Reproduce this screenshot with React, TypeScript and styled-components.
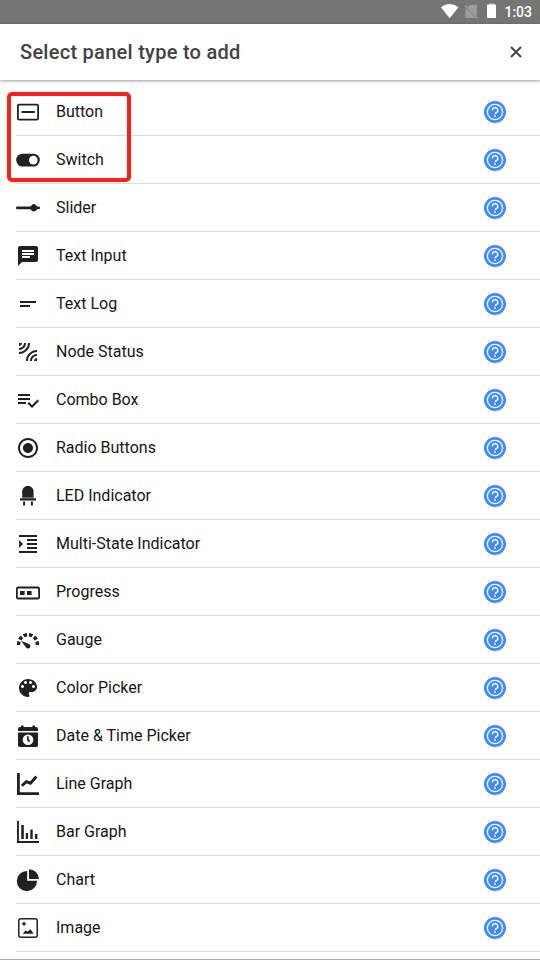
import React from "react";
import styled, { createGlobalStyle } from "styled-components";

const GlobalStyle = createGlobalStyle`
  * { box-sizing: border-box; }
  body { margin: 0; background: #fff; overflow: hidden; }
`;

const Screen = styled.div`
  display: flex;
  flex-direction: column;
  width: 540px;
  height: 960px;
  overflow: hidden;
  background: #fff;
  border-bottom: 1px solid #a9abab;
  font-family: Roboto, "Liberation Sans", sans-serif;
  color: #161616;
`;

const StatusBar = styled.div`
  display: flex;
  flex: none;
  align-items: center;
  justify-content: flex-end;
  height: 24px;
  padding-right: 8px;
  background: #757575;
  color: #fff;
`;

const StatusIcons = styled.svg`
  width: 60px;
  height: 24px;
  margin-right: 4px;
`;

const Clock = styled.span`
  font-size: 14px;
  font-weight: 500;
  line-height: 24px;
`;

const Header = styled.header`
  display: flex;
  flex: none;
  align-items: center;
  justify-content: space-between;
  height: 56px;
  padding: 0 16px 0 20px;
  background: #fff;
  box-shadow: 0 1px 3px rgba(0, 0, 0, 0.4);
`;

const Title = styled.h1`
  margin: 0;
  font-size: 20px;
  font-weight: 500;
  line-height: 56px;
  letter-spacing: 0.27px;
  color: #424242;
`;

const CloseButton = styled.button`
  display: flex;
  padding: 0;
  border: 0;
  background: none;
  color: #424242;
`;

const List = styled.ul`
  margin: 0;
  padding: 8px 0 0 16px;
  list-style: none;
`;

const Row = styled.li`
  display: flex;
  align-items: center;
  height: 48px;
  padding: 1px 34px 0 0;
  border-bottom: 1px solid #dcdcdc;
`;

const Label = styled.span`
  flex: 1;
  margin-left: 16px;
  font-size: 16px;
  line-height: 24px;
`;

const Glyph = styled.svg`
  display: block;
  flex: none;
  width: 24px;
  height: 24px;
  fill: #212121;
`;

const HelpGlyph = styled.svg`
  display: block;
  width: 22px;
  height: 22px;
`;

const Highlight = styled.div`
  position: absolute;
  left: 7px;
  top: 92px;
  width: 124px;
  height: 90px;
  border: 4px solid #fb2019;
  border-radius: 5px;
`;

const ink = "#212121";

const panels: { label: string; icon: React.ReactNode }[] = [
  {
    label: "Button",
    icon: (
      <>
        <rect x="1.9" y="4.6" width="20.2" height="15" rx="1.2" fill="none" stroke={ink} strokeWidth="1.8" />
        <rect x="5.5" y="11" width="13.3" height="2" />
      </>
    ),
  },
  {
    label: "Switch",
    icon: (
      <>
        <rect x="0.2" y="5.7" width="23.6" height="12.8" rx="6.4" />
        <circle cx="17.3" cy="12.1" r="4.3" fill="#fff" />
      </>
    ),
  },
  {
    label: "Slider",
    icon: (
      <>
        <rect x="0" y="10.4" width="24" height="2.9" rx="1.4" />
        <path d="M13.600 11.800 15.800 8.900q2-1.600 4 0l2.200 2.900-2.200 2.900q-2 1.600-4 0z" />
      </>
    ),
  },
  {
    label: "Text Input",
    icon: <path d="M20 2H4c-1.1 0-1.99.9-1.99 2L2 22l4-4h14c1.1 0 2-.9 2-2V4c0-1.1-.9-2-2-2zM6 9h12v2H6V9zm8 5H6v-2h8v2zm4-6H6V6h12v2z" />,
  },
  { label: "Text Log", icon: <path d="M4 9h16v2H4V9zm0 4h10v2H4v-2z" /> },
  {
    label: "Node Status",
    icon: <path d="M6 3H3v3c1.66 0 3-1.34 3-3zm8 0h-2c0 4.97-4.03 9-9 9v2c6.08 0 11-4.93 11-11zm-4 0H8c0 2.76-2.24 5-5 5v2c3.87 0 7-3.13 7-7zm0 18h2c0-4.97 4.03-9 9-9v-2c-6.07 0-11 4.93-11 11zm8 0h3v-3c-1.66 0-3 1.34-3 3zm-4 0h2c0-2.76 2.24-5 5-5v-2c-3.87 0-7 3.13-7 7z" />,
  },
  {
    label: "Combo Box",
    icon: <path d="M14 10H2v2h12v-2zm0-4H2v2h12V6zM2 16h8v-2H2v2zm19.5-4.5L23 13l-6.99 7-4.51-4.5L13 14l3.01 3 5.49-5.5z" />,
  },
  {
    label: "Radio Buttons",
    icon: <path d="M12 7c-2.76 0-5 2.24-5 5s2.24 5 5 5 5-2.24 5-5-2.24-5-5-5zm0-5C6.48 2 2 6.48 2 12s4.48 10 10 10 10-4.48 10-10S17.52 2 12 2zm0 18c-4.42 0-8-3.58-8-8s3.58-8 8-8 8 3.58 8 8-3.58 8-8 8z" />,
  },
  {
    label: "LED Indicator",
    icon: (
      <>
        <path d="M6.2 13.2V7.5a5.7 5.7 0 0 1 11.4 0v5.700z" />
        <path d="M6.2 13.2h11.4v1H6.2z" opacity=".7" />
        <path d="M4 14.2h16v2.2H4zM7.1 17.6h2v4h-2zM14.9 17.6h2v4h-2z" />
      </>
    ),
  },
  {
    label: "Multi-State Indicator",
    icon: <path d="M3 21h18v-2H3v2zM3 8v8l4-4-4-4zm8 9h10v-2H11v2zM3 3v2h18V3H3zm8 6h10V7H11v2zm0 4h10v-2H11v2z" />,
  },
  {
    label: "Progress",
    icon: (
      <>
        <rect x=".9" y="7.5" width="22.2" height="11" rx="1.3" fill="none" stroke={ink} strokeWidth="1.8" />
        <path d="M4 11h4.6v4H4zM11 11h4.6v4H11z" />
      </>
    ),
  },
  {
    label: "Gauge",
    icon: (
      <>
        <path
          d="M2.700 17A9.350 9.350 0 1 1 21.300 17"
          pathLength="100"
          fill="none"
          stroke={ink}
          strokeWidth="3.400"
          strokeDasharray="11.500 6.200"
        />
        <path d="m5 12.800 7.400 2.900a2.400 2.400 0 1 1-2.500 3.500z" />
      </>
    ),
  },
  {
    label: "Color Picker",
    icon: <path d="M12 3c-4.97 0-9 4.03-9 9s4.03 9 9 9c.83 0 1.5-.67 1.5-1.5 0-.39-.15-.74-.39-1.01-.23-.26-.38-.61-.38-.99 0-.83.67-1.5 1.5-1.5H16c2.76 0 5-2.24 5-5 0-4.42-4.03-8-9-8zm-5.5 9c-.83 0-1.5-.67-1.5-1.5S5.67 9 6.500 9 8 9.670 8 10.500 7.330 12 6.500 12zm3-4C8.670 8 8 7.330 8 6.500S8.670 5 9.500 5s1.500.67 1.500 1.500S10.330 8 9.500 8zm5 0c-.83 0-1.500-.67-1.500-1.500S13.670 5 14.500 5s1.500.67 1.500 1.500S15.330 8 14.500 8zm3 4c-.83 0-1.500-.67-1.500-1.500S16.670 9 17.500 9s1.500.67 1.500 1.500-.67 1.500-1.500 1.500z" />,
  },
  {
    label: "Date & Time Picker",
    icon: (
      <>
        <path d="M2 7V5q0-1.900 2-1.900h1V1.600h2.600v1.500h8.800V1.600H19v1.500h1q2 0 2 1.900v2zM2 8.600h20V21.200q0 1.800-1.800 1.800H3.800Q2 23 2 21.200z" />
        <circle cx="12" cy="15.700" r="5.300" fill="#fff" />
        <path d="M11 12.300h1.700v3l1.500 1.800-1.400 1.200-1.800-2.300z" />
      </>
    ),
  },
  {
    label: "Line Graph",
    icon: (
      <>
        <path d="M1 1h2.800v19.200H23V23H1z" />
        <path d="m5.800 13.800 4.600-4.200 4 1.600 6-6.600" fill="none" stroke={ink} strokeWidth="2.900" />
      </>
    ),
  },
  {
    label: "Bar Graph",
    icon: <path d="M1 1h1.900v20.100H23V23H1zM5.200 5h2.600v14H5.200zM9.800 13h2.300v6H9.800zM14.300 9.600h2.400V19h-2.400zM18.900 14h2.500v5h-2.500z" />,
  },
  {
    label: "Chart",
    icon: (
      <>
        <path d="M11.200 3v9.800H21A10.100 10.100 0 1 1 11.200 3z" />
        <path d="M13 1.200A10 10 0 0 1 22.900 11H13z" />
      </>
    ),
  },
  {
    label: "Image",
    icon: (
      <>
        <rect x="2.800" y="2.800" width="18.400" height="18.400" rx="2" fill="none" stroke={ink} strokeWidth="1.500" />
        <path d="m8 5.600.7 1.500 1.500.7-1.500.7L8 10l-.7-1.500-1.500-.7 1.500-.7z" stroke={ink} strokeWidth=".4" />
        <path d="m6.600 17.800 3.200-3.600 1.700 1.500 3-2.500 3 4.600z" />
      </>
    ),
  },
];

const Help = () => (
  <HelpGlyph viewBox="0 0 22 22">
    <circle cx="11" cy="11" r="11" fill="#448aff" />
    <circle cx="11" cy="11" r="7.600" fill="none" stroke="#fff" strokeWidth="1.300" />
    <path d="M8.200 9.300a2.800 2.600 0 1 1 4.500 2c-1 .8-1.700 1.100-1.700 2.300" fill="none" stroke="#fff" strokeWidth="1.400" />
    <rect x="10.200" y="14.500" width="1.600" height="1.500" fill="#fff" />
  </HelpGlyph>
);

export default function App() {
  return (
    <Screen>
      <GlobalStyle />
      <StatusBar>
        <StatusIcons viewBox="0 0 60 24">
          <path d="M.9 7.200Q9.500.800 18.500 7.200L9.700 18.200z" fill="#fff" />
          <path d="m29.500 5 7.200 0v13h-11.200V8.800z" fill="#9e9e9e" />
          <path d="m25 5.800 12.500 12.800" stroke="#757575" strokeWidth="2.200" />
          <path d="m25 5.300 12.500 13.100" stroke="#a8a8a8" strokeWidth="1.100" />
          <path d="M49 3.400h5V5h-5z" fill="#b5b5b5" />
          <rect x="47" y="4.600" width="9" height="13.400" rx=".7" fill="#fff" />
        </StatusIcons>
        <Clock>1:03</Clock>
      </StatusBar>
      <Header>
        <Title>Select panel type to add</Title>
        <CloseButton aria-label="Close">
          <svg width="16" height="16" viewBox="0 0 16 16">
            <path d="m3 3 10 10M13 3 3 13" stroke="currentColor" strokeWidth="1.900" />
          </svg>
        </CloseButton>
      </Header>
      <List>
        {panels.map(({ label, icon }) => (
          <Row key={label}>
            <Glyph viewBox="0 0 24 24">{icon}</Glyph>
            <Label>{label}</Label>
            <Help />
          </Row>
        ))}
      </List>
      <Highlight />
    </Screen>
  );
}
